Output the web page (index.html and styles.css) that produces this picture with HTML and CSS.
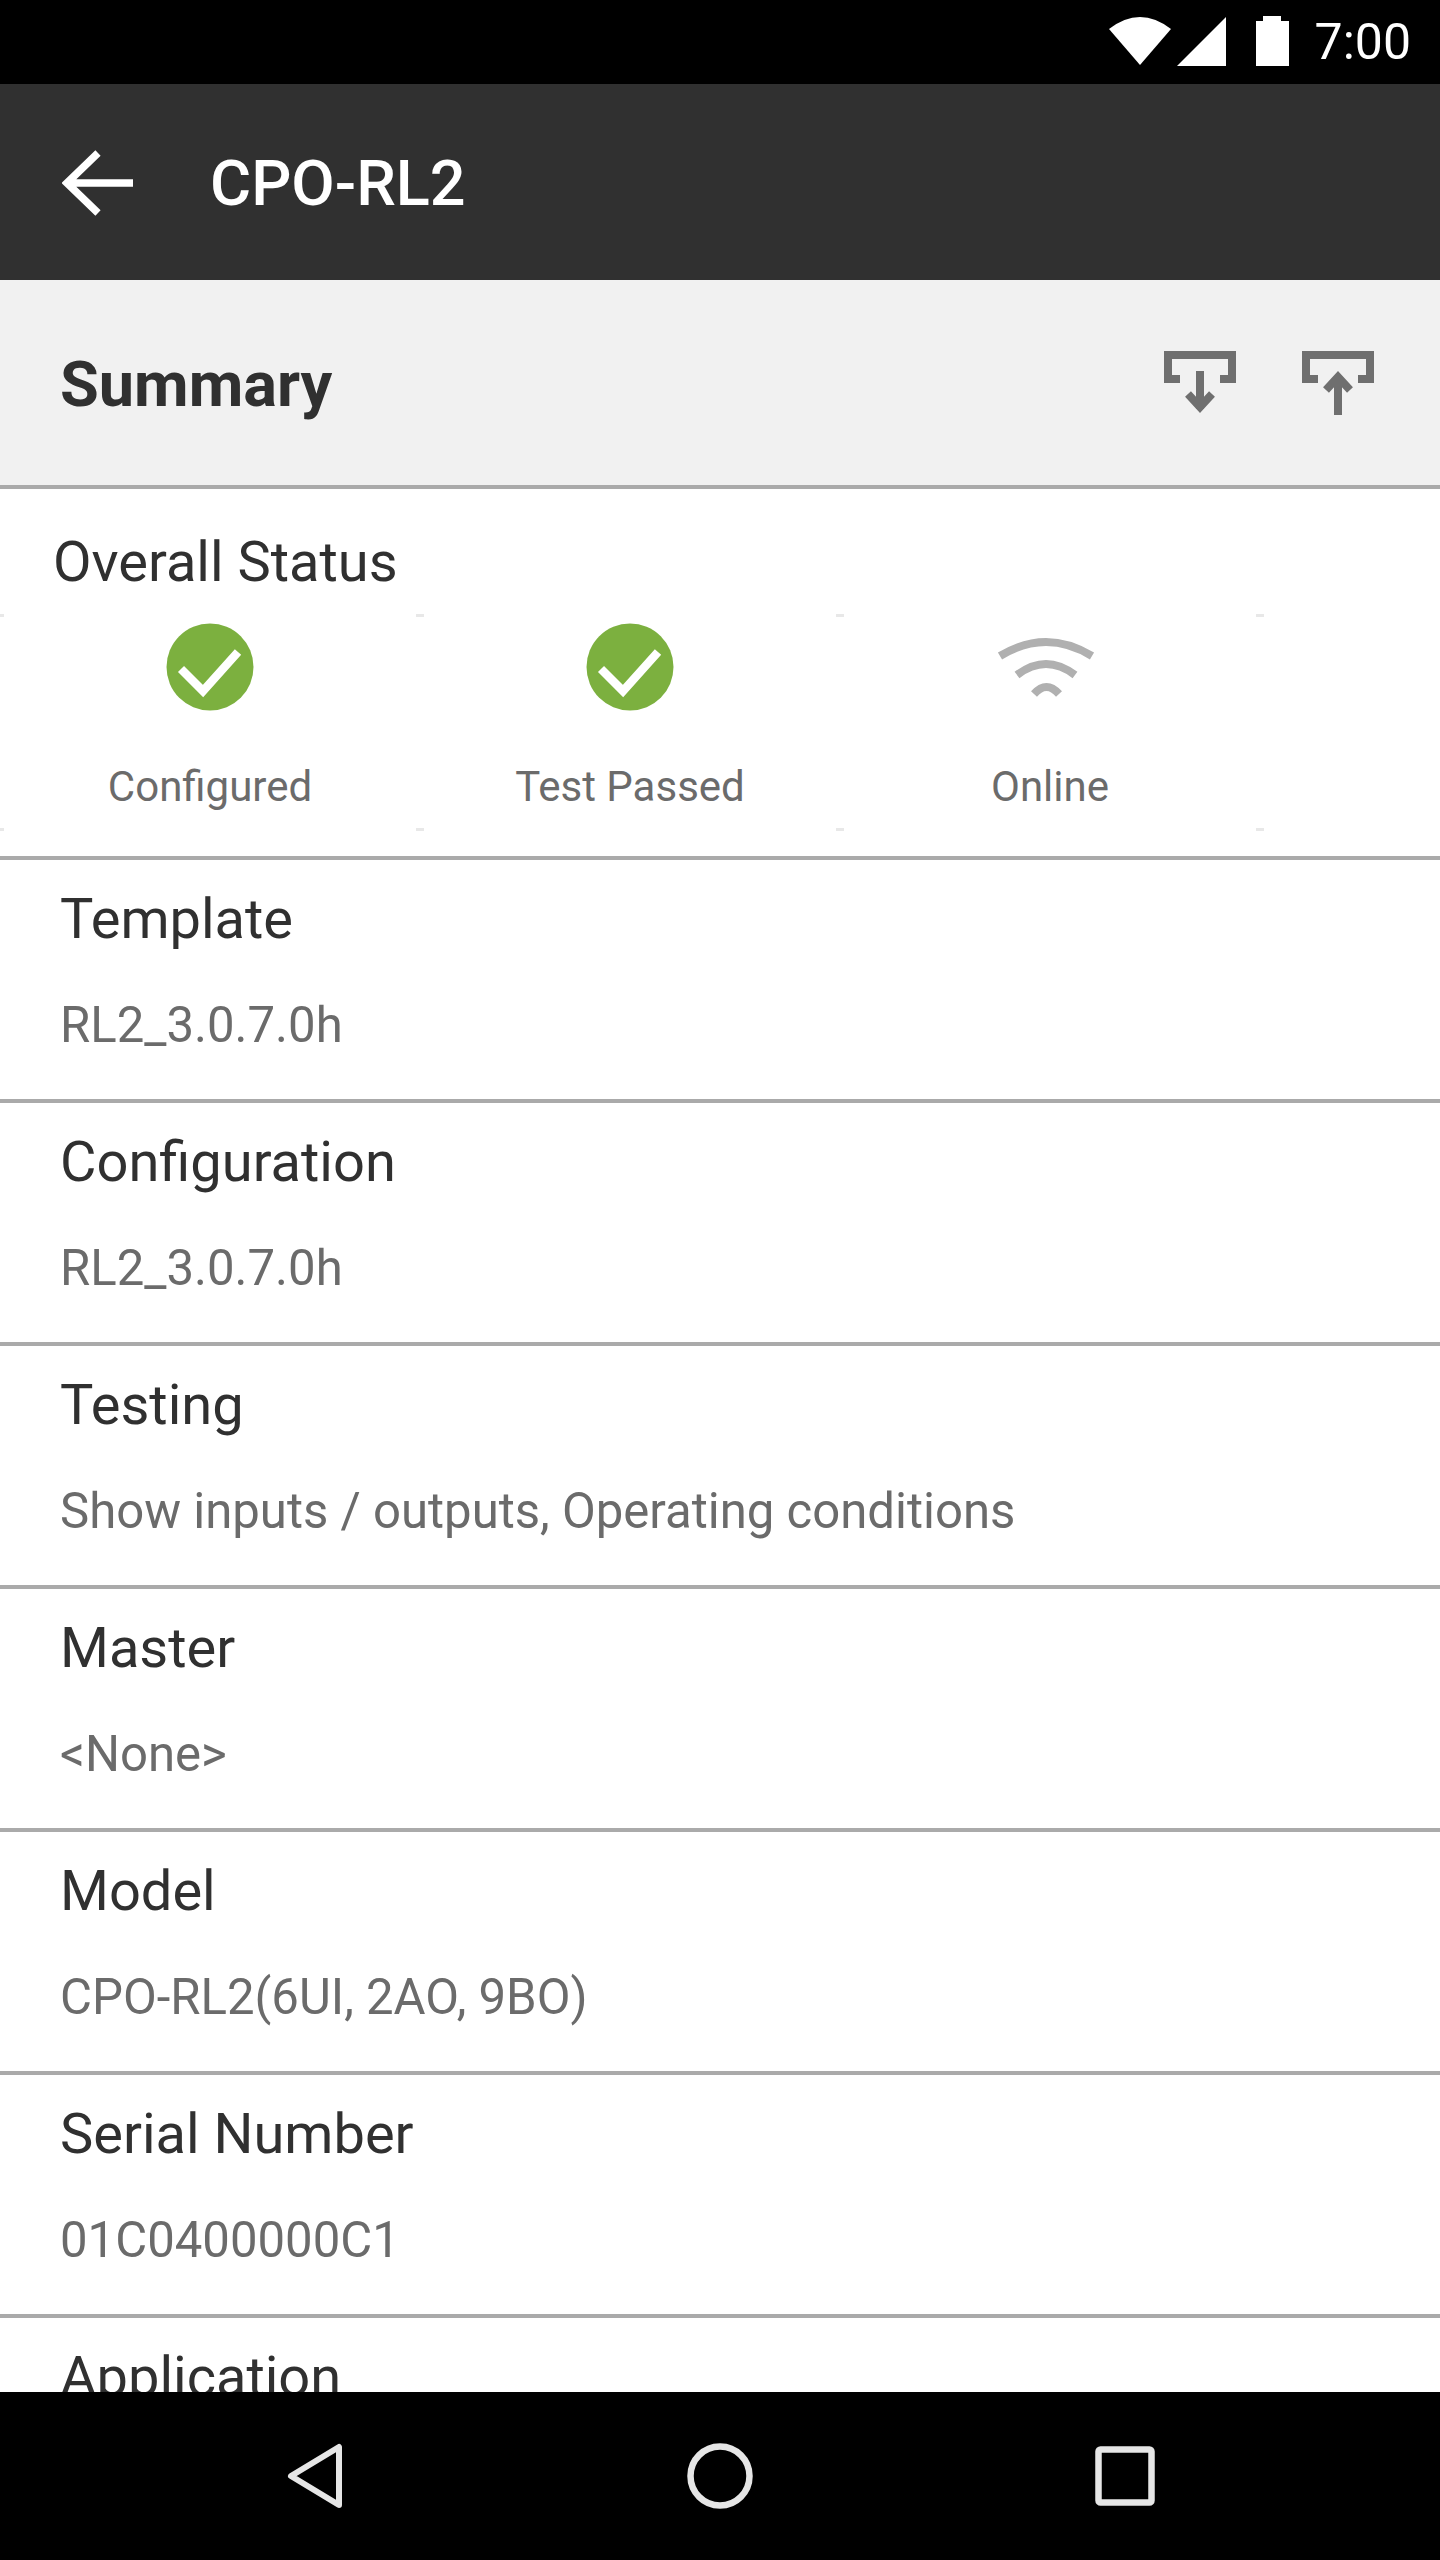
FILE: index.html
```html
<!DOCTYPE html>
<html lang="en">
<head>
    <meta charset="UTF-8">
    <meta name="viewport" content="width=device-width, initial-scale=1.0">
    <title>CPO-RL2</title>
    <link rel="stylesheet" href="styles.css">
</head>
<body>
    <div class="phone">
        <div class="status-bar">
            <svg class="status-icons" width="180" height="52" viewBox="0 0 180 52">
                <path d="M0 13 Q31 -11 62 13 L31 49 Z" fill="#fff"/>
                <path d="M68 50 L117 1 V50 Z" fill="#fff"/>
                <path d="M147 50 V5 H154 V0 H172 V5 H180 V50 Z" fill="#fff"/>
            </svg>
            <span class="clock">7:00</span>
        </div>

        <header class="app-bar">
            <svg class="back-icon" width="72" height="66" viewBox="0 0 72 66">
                <path d="M36 3 L5 33 L36 63 M5 33 H71" fill="none" stroke="#fff" stroke-width="7.5"/>
            </svg>
            <h1>CPO-RL2</h1>
        </header>

        <main class="content">
            <section class="summary">
                <h2>Summary</h2>
                <div class="summary-actions">
                    <svg width="72" height="64" viewBox="0 0 72 64">
                        <path d="M4 32 V4 H68 V32 M0 28 H16 M56 28 H72" fill="none" stroke="#6f6f6f" stroke-width="8"/>
                        <path d="M36 20 V58 M24 43 L36 56 L48 43" fill="none" stroke="#6f6f6f" stroke-width="8"/>
                    </svg>
                    <svg width="72" height="64" viewBox="0 0 72 64">
                        <path d="M4 32 V4 H68 V32 M0 28 H16 M56 28 H72" fill="none" stroke="#6f6f6f" stroke-width="8"/>
                        <path d="M36 64 V26 M24 39 L36 26 L48 39" fill="none" stroke="#6f6f6f" stroke-width="8"/>
                    </svg>
                </div>
            </section>

            <section class="overall">
                <h3>Overall Status</h3>
                <div class="status-grid">
                    <div class="status-cell">
                        <svg class="status-icon" width="88" height="88" viewBox="0 0 88 88">
                            <circle cx="44" cy="44" r="43.5" fill="#7cb03f"/>
                            <path d="M15 46 L37 68 L72 29" fill="none" stroke="#fff" stroke-width="8.5"/>
                        </svg>
                        <span>Configured</span>
                    </div>
                    <div class="status-cell">
                        <svg class="status-icon" width="88" height="88" viewBox="0 0 88 88">
                            <circle cx="44" cy="44" r="43.5" fill="#7cb03f"/>
                            <path d="M15 46 L37 68 L72 29" fill="none" stroke="#fff" stroke-width="8.5"/>
                        </svg>
                        <span>Test Passed</span>
                    </div>
                    <div class="status-cell">
                        <svg class="status-icon wifi-icon" width="104" height="88" viewBox="0 0 104 88">
                            <g fill="none" stroke="#b0b0b0" stroke-width="8">
                                <path d="M6 33 Q52 5 98 33"/>
                                <path d="M23 52 Q52 30 81 52"/>
                                <path d="M40 71 Q52.5 57 65 71"/>
                            </g>
                        </svg>
                        <span>Online</span>
                    </div>
                    <div class="status-cell"></div>
                </div>
            </section>

            <section class="row">
                <h3>Template</h3>
                <p>RL2_3.0.7.0h</p>
            </section>
            <section class="row">
                <h3>Configuration</h3>
                <p>RL2_3.0.7.0h</p>
            </section>
            <section class="row">
                <h3>Testing</h3>
                <p>Show inputs / outputs, Operating conditions</p>
            </section>
            <section class="row">
                <h3>Master</h3>
                <p>&lt;None&gt;</p>
            </section>
            <section class="row">
                <h3>Model</h3>
                <p>CPO-RL2(6UI, 2AO, 9BO)</p>
            </section>
            <section class="row">
                <h3>Serial Number</h3>
                <p>01C0400000C1</p>
            </section>
            <section class="row">
                <h3>Application</h3>
            </section>
        </main>

        <nav class="nav-bar">
            <div class="nav-item">
                <svg width="60" height="70" viewBox="0 0 60 70">
                    <path d="M54 6 V64 L6 35 Z" fill="none" stroke="#e6e6e6" stroke-width="6" stroke-linejoin="round"/>
                </svg>
            </div>
            <div class="nav-item">
                <svg width="66" height="66" viewBox="0 0 66 66">
                    <circle cx="33" cy="33" r="29.5" fill="none" stroke="#e6e6e6" stroke-width="6.5"/>
                </svg>
            </div>
            <div class="nav-item">
                <svg width="60" height="60" viewBox="0 0 60 60">
                    <rect x="3.5" y="3.5" width="53" height="53" rx="2" fill="none" stroke="#e6e6e6" stroke-width="6.5"/>
                </svg>
            </div>
        </nav>
    </div>
</body>
</html>
```

FILE: styles.css
```css
body {
    font-family: Roboto, "Liberation Sans", sans-serif;
    background-color: white;
    margin: 0;
    padding: 0;
}

h1, h2, h3, p {
    margin: 0;
    font-weight: normal;
}

.phone {
    display: flex;
    flex-direction: column;
    height: 2560px;
    overflow: hidden;
}

.status-bar {
    flex: none;
    height: 84px;
    background-color: black;
    color: white;
    display: flex;
    align-items: center;
    justify-content: flex-end;
    padding-right: 29px;
}

.status-icons {
    margin-right: 26px;
}

.clock {
    font-size: 50px;
}

.app-bar {
    flex: none;
    height: 196px;
    background-color: #303030;
    color: white;
    display: flex;
    align-items: center;
    padding-left: 62px;
}

.app-bar h1 {
    font-size: 63px;
    font-weight: 500;
    margin-left: 76px;
    padding-top: 3px;
}

.back-icon {
    flex: none;
    margin-top: 2px;
}

.content {
    flex: 1;
    overflow: hidden;
}

.summary {
    height: 205px;
    background-color: #f1f1f1;
    border-bottom: 4px solid #aaaaaa;
    display: flex;
    align-items: center;
    justify-content: space-between;
    padding: 0 66px 0 60px;
}

.summary h2 {
    font-size: 63px;
    font-weight: 700;
    color: #303030;
    padding-top: 4px;
}

.summary-actions {
    display: flex;
    gap: 66px;
}

.overall {
    height: 367px;
    border-bottom: 4px solid #aaaaaa;
}

.overall h3 {
    font-size: 56px;
    color: #303030;
    padding: 40px 0 0 53px;
}

.status-grid {
    display: grid;
    grid-template-columns: repeat(4, 420px);
    margin-top: 19px;
}

.status-cell {
    position: relative;
    height: 217px;
    display: flex;
    flex-direction: column;
    align-items: center;
    color: #6b6b6b;
    font-size: 42px;
}

.status-cell::before,
.status-cell::after {
    content: "";
    position: absolute;
    left: -4px;
    width: 8px;
    height: 3px;
    background-color: #e8e8e8;
}

.status-cell::before {
    top: 0;
}

.status-cell::after {
    bottom: 0;
}

.status-icon {
    margin-top: 9px;
    height: 88px;
    flex: none;
}

.wifi-icon {
    margin-right: 8px;
}

.status-cell span {
    margin-top: 51px;
}

.row {
    height: 239px;
    border-bottom: 4px solid #aaaaaa;
    padding-left: 60px;
}

.row h3 {
    font-size: 56px;
    color: #303030;
    padding-top: 26px;
}

.row p {
    font-size: 49.1px;
    color: #6b6b6b;
    margin-top: 44px;
}

.nav-bar {
    flex: none;
    height: 168px;
    background-color: black;
    display: flex;
    align-items: center;
    justify-content: center;
}

.nav-item {
    width: 405px;
    display: flex;
    justify-content: center;
}
```
